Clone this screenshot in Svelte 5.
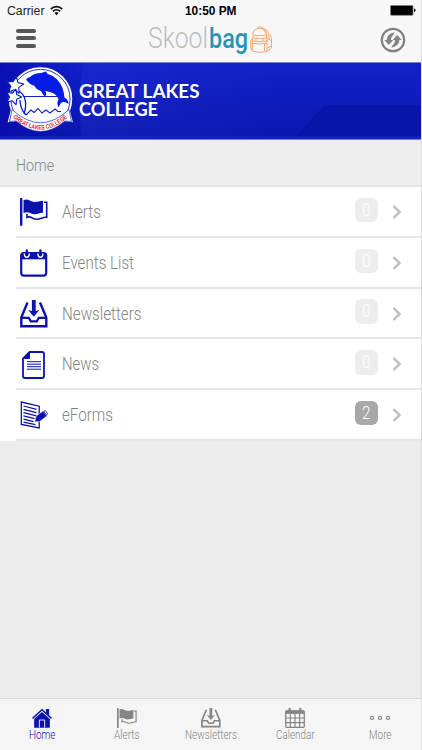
<script>
  const rows = [
    { icon: 'flag', label: 'Alerts', width: 39, inset: 0, count: 0 },
    { icon: 'events', label: 'Events List', width: 72, inset: 0, count: 0 },
    { icon: 'inbox', label: 'Newsletters', width: 79.5, inset: 0.3, count: 0 },
    { icon: 'news', label: 'News', width: 37, inset: 0.3, count: 0 },
    { icon: 'forms', label: 'eForms', width: 51, inset: 0, count: 2 }
  ];
  const tabs = [
    { icon: 'home', label: 'Home', width: 26.5 },
    { icon: 'flag', label: 'Alerts', width: 25.5 },
    { icon: 'inbox', label: 'Newsletters', width: 52 },
    { icon: 'calendar', label: 'Calendar', width: 38.5 },
    { icon: 'more', label: 'More', width: 22.5 }
  ];

  function star(cx, cy, r, turn) {
    return Array.from({ length: 10 }, (_, i) => {
      const a = turn + (i * Math.PI) / 5;
      const d = i % 2 ? r * 0.48 : r;
      return `${(cx + d * Math.sin(a)).toFixed(1)},${(cy - d * Math.cos(a)).toFixed(1)}`;
    }).join(' ');
  }
</script>

{#snippet fit(label, width, size, height, base)}
  <svg class="fit" {width} {height}>
    <text x="0" y={base} font-size={size} textLength={width} lengthAdjust="spacingAndGlyphs">{label}</text>
  </svg>
{/snippet}

{#snippet icon(name, size)}
  <svg class="icon" width={size} height={size} viewBox="0 0 28 28" fill="none" stroke="currentColor">
    {#if name === 'flag'}
      <path d="M1.200 1V26.800" stroke-width="2.400" stroke-linecap="round" />
      <path d="M3.500 2.200c4-2.200 7 1.600 11 1.800 3 .1 5-.8 8.500-1.200v12c-3.500-.2-5 1.700-9 1.400-4-.6-6-3.400-10.500-1.200z" fill="currentColor" stroke="none" />
      <path d="M24 4.300h2.700v15c-4-.6-6 2.200-10.200 2-4-.2-6-3.900-9.500-1.900v-3.500" stroke-width="1.600" />
    {:else if name === 'events'}
      <rect x="1.200" y="4" width="25" height="22.600" rx="2.500" stroke-width="2.200" />
      <path d="M1.500 4.500h24.500v5.800H1.500z" fill="currentColor" stroke="none" />
      <path d="M4.300 4.500c0 5 5 5 5 0M17.900 4.500c0 5 5 5 5 0" stroke="#fff" stroke-width="1.300" />
      <path d="M6.800 1.500v4M20.400 1.500v4" stroke-width="2.300" stroke-linecap="round" />
    {:else if name === 'inbox'}
      <path d="M7.500 2.500 1.300 17.500v8.700h25V17.500L20 2.500" stroke-width="2.400" />
      <path d="M1.300 17.800h7.500l2 3.500h6l2-3.500h7.500" stroke-width="2.300" />
      <path d="M13.800 0v12" stroke-width="3.800" />
      <path d="M8 9.800l3.500 1.200h4.600l3.500-1.200-5.800 7z" fill="currentColor" stroke="none" />
    {:else if name === 'news'}
      <path d="M9.500 1H22q2 0 2 2v22q0 2-2 2H5q-2 0-2-2V7.500z" stroke-width="1.800" />
      <path d="M9.500 1v6.500H3z" fill="currentColor" />
      <path d="M7 10.700h14M7 13.200h14M7 15.700h14M7 18.200h14" stroke-width="1" />
    {:else if name === 'forms'}
      <path d="M1.300 1 19.200 5.200v21.800L1.300 23.500z" stroke-width="1.300" />
      <path d="M3.500 5l13 3.300M3.500 8.300l13 3.300M3.500 11.600l13 3.300M3.500 14.900l11 2.800M3.500 18.200l10 2.500M3.500 21.200l12 2.500" stroke-width="1.200" />
      <path d="M14.800 21l1.200-5.700 7-5.300 3.800 5-7 5.400z" fill="currentColor" stroke="#fff" stroke-width=".5" />
      <path d="M23.600 10.300l1.700-.8 2.200 2.900-.9 1.900z" fill="#fff" stroke-width=".8" />
    {:else if name === 'home'}
      <path d="M.8 14.500 14 2.300l13.200 12.200" stroke-width="2" />
      <path d="M19.500 1.500H24v9l-4.500-4zM3 15.500 14 5.500l11 10v12H3z" fill="currentColor" stroke="none" />
      <path d="M10.300 27.500V16.800h7.400v10.700" stroke="#f5f5f5" stroke-width="1.300" />
    {:else if name === 'calendar'}
      <rect x="1" y="4" width="26" height="23" rx="1.500" stroke-width="1.800" />
      <path d="M1 3.500h26v4.800H1z" fill="currentColor" stroke="none" />
      <path d="M6.500 0v6M21.500 0v6" stroke-width="3" />
      <path d="M7.500 8v19M14 8v19M20.500 8v19M1 14h26M1 20.500h26" stroke-width="1.600" />
    {:else}
      <circle cx="2.900" cy="13.800" r="2.300" stroke-width="1.500" />
      <circle cx="14" cy="13.800" r="2.300" stroke-width="1.500" />
      <circle cx="25.100" cy="13.800" r="2.300" stroke-width="1.500" />
    {/if}
  </svg>
{/snippet}

<main class="screen">
  <header>
    <div class="status">
      <div class="carrier">
        {@render fit('Carrier', 37.5, 12, 20, 15.2)}
        <svg width="13" height="11" viewBox="0 0 13 11" fill="none" stroke="#111" stroke-width="1.700">
          <path d="M.8 4.100a8 8 0 0 1 11.400 0M2.900 6.300a5.200 5.200 0 0 1 7.200 0" />
          <path d="M4.500 8a2.900 2.900 0 0 1 4 0l-2 2.200z" fill="#111" stroke="none" />
        </svg>
      </div>
      <div class="clock">{@render fit('10:50 PM', 51.5, 12, 20, 15.3)}</div>
      <svg class="battery" width="26" height="11" viewBox="0 0 26 11">
        <rect x=".5" y=".5" width="22.500" height="9.800" rx="1" stroke="#777" stroke-width=".7" />
        <path d="M24 3.500q1.500 0 1.500 1.800t-1.500 1.800z" />
      </svg>
    </div>
    <div class="nav">
      <div class="menu"><i></i><i></i><i></i></div>
      <div class="logo">
        <span class="skool">{@render fit('Skool', 60, 29, 40, 28)}</span>
        <span class="bag">{@render fit('bag', 39, 28, 40, 28)}</span>
        <svg class="pack" width="24" height="28" viewBox="0 0 24 28" fill="none" stroke="#eda468" stroke-width=".9" stroke-linejoin="round">
          <path d="M3 25 1.800 22V14L4 12V7q1-4.500 7-4.500T17.500 8l.5 6v11.500q-7 2-15-.5z" />
          <path d="M8 2.800q0-2 3-2t3 2M13 2.500q6 0 6.800 6L20 13l2.500 2v7L18 25.500M4 12q7 1.500 13.800 0M4 15q7 1.500 14 0M2 17q8 2 16 0M4 9q6 1.500 13 0M15 4.500q3 2 3 8M20 13l-2 2M20 8l2 2 .5 5M18 22l4.500-2" />
          <path d="M3.500 12v12M15.500 17v8.500M7 12v3M14 12v3" />
        </svg>
      </div>
      <svg class="sync" width="26" height="26" viewBox="0 0 26 26" fill="#858585">
        <circle cx="13" cy="13" r="11.200" fill="none" stroke="#808080" stroke-width="2.200" />
        <path d="M4.300 13h2.300q.3-6.500 8.400-7.800l-2 3q-2 1.600-2 4.800h2.300L8.800 18z" />
        <path d="M21.700 13h-2.300q-.3 6.500-8.400 7.800l2-3q2-1.600 2-4.800h-2.300L17.200 8z" />
      </svg>
    </div>
  </header>

  <section class="banner">
    <svg width="421" height="78" viewBox="0 0 421 78">
      <defs>
        <linearGradient id="blue" x1="0" y1="0" x2="0" y2="1">
          <stop offset="0" stop-color="#1121cb" />
          <stop offset="1" stop-color="#0c17ad" />
        </linearGradient>
        <linearGradient id="side" x1="0" x2="1">
          <stop offset="0" stop-color="#0707a8" stop-opacity=".6" />
          <stop offset="1" stop-color="#0707a8" stop-opacity="0" />
        </linearGradient>
        <linearGradient id="sheen" x1="0" x2="1">
          <stop offset="0" stop-color="#3040d8" stop-opacity=".2" />
          <stop offset="1" stop-color="#3040d8" stop-opacity="0" />
        </linearGradient>
      </defs>
      <rect width="421" height="78" fill="url(#blue)" />
      <rect width="84" height="78" fill="url(#side)" />
      <path d="M84 0q-8 38-2 75h200V0z" fill="url(#sheen)" />
      <path d="M325 43h96v32H295z" fill="#0710a2" opacity=".6" />
      <path d="M0 75.500h421" stroke="#1426cb" stroke-width="2" />
      <path d="M0 .5h421M0 77.500h421" stroke="#7180de" />
      <g stroke="#fff" fill="none">
        <path d="M12 46 8.500 59.500l7-.8h50l6.500.8-3.500-13.500z" fill="#1420b8" stroke-width="1.300" />
        <circle cx="40.500" cy="37" r="31" fill="#fff" stroke-width="1.500" />
        <circle cx="40.500" cy="37" r="29.600" stroke="#1524c8" stroke-width=".9" />
        <path d="M12 47.500Q40.500 74 69 47.500l2.500 12-6.500-.5Q40.500 80 16 59l-6.500.5z" fill="#fff" stroke="#1524c8" stroke-width=".7" />
      </g>
      <path d="M24 34.500h36M26 53l5-5 3 2.500 4-4 4 4.500 4-3 4 3 5-4 3 2.500 3 0" fill="none" stroke="#1222c5" stroke-width="1.100" />
      <path d="M26 17.500q2-2.500 4-2.500 4-4 11-4l5-1.500 1.500 2.300Q58 15 62.500 26q1.500 4 2 9.500 4 2 4 6.500-3-2.500-6-2-3 1.500-3.500 5.500-3-3-.5-8.500-2-5-7-6.500-4-1-6.500-1.800 2.500 2.500 0 6-2.500-2-4-5.700-4-1-7-5.500-4-.5-8-6z" fill="#071be6" />
      <path d="M20 38q0 9 6 15M19 29q10 7 5 23" fill="none" stroke="#071bc7" stroke-width="1.300" />
      <g fill="#fff" stroke="#071bc7" stroke-width="1.100" stroke-linejoin="round">
        <polygon points={star(15, 23.5, 8.8, 0.15)} />
        <polygon points={star(13.500, 35, 8.2, 0.3)} />
      </g>
      <path id="ribbon" d="M11.500 54.500Q40.500 81 69.500 54" fill="none" />
      <text class="seal" font-size="6.500"><textPath href="#ribbon" startOffset="1.500" textLength="61" lengthAdjust="spacingAndGlyphs">GREAT LAKES COLLEGE</textPath></text>
      <text class="school" x="79" y="36" font-size="19.500" textLength="120.500" lengthAdjust="spacingAndGlyphs">GREAT LAKES</text>
      <text class="school" x="79" y="53.500" font-size="19" textLength="79" lengthAdjust="spacingAndGlyphs">COLLEGE</text>
    </svg>
  </section>

  <div class="crumb">{@render fit('Home', 38, 17, 45, 30.5)}</div>

  <ul>
    {#each rows as row}
      <li>
        <span class="row-icon">{@render icon(row.icon, 28)}</span>
        <span class="label" style:padding-left="{row.inset}px">{@render fit(row.label, row.width, 17.5, 48, 30.5)}</span>
        <span class="badge" class:on={row.count > 0}>{@render fit(String(row.count), 8.5, 18, 24, 18)}</span>
        <svg class="chevron" width="10" height="16" viewBox="0 0 10 16" fill="none" stroke="#bcbcbc" stroke-width="2.400">
          <path d="M1.500 2 7.500 8l-6 6" />
        </svg>
      </li>
    {/each}
  </ul>

  <nav class="tabs">
    {#each tabs as tab, i}
      <div class="tab" class:current={i === 0}>
        {@render icon(tab.icon, 20)}
        {@render fit(tab.label, tab.width, 12, 16, 11)}
      </div>
    {/each}
  </nav>
</main>

<style>
  .screen {
    width: 422px;
    height: 750px;
    box-sizing: border-box;
    border-right: 1px solid #dedede;
    display: flex;
    flex-direction: column;
    background: #ececec;
    font-family: Roboto, sans-serif;
    font-weight: 300;
    color: #858585;
    overflow: hidden;
  }
  svg { display: block; flex: none; }
  .fit { overflow: visible; fill: currentColor; }
  header { height: 62px; background: #f7f7f7; }
  .status {
    height: 20px;
    display: grid;
    grid-template-columns: 1fr 51.5px 1fr;
    color: #000;
    font-family: "Liberation Sans", Arial, sans-serif;
  }
  .carrier { display: flex; gap: 6px; padding-left: 6.500px; font-weight: 400; color: #222; }
  .carrier > svg:last-child { margin-top: 5px; }
  .clock { font-weight: 700; }
  .battery { justify-self: end; margin: 5.300px 5px 0 0; }
  .nav { height: 42px; display: flex; }
  .menu {
    width: 131.500px;
    padding: 8.500px 0 0 16px;
    display: flex;
    flex-direction: column;
    gap: 3.500px;
  }
  .menu i { width: 20px; height: 4px; border-radius: 2px; background: #575757; }
  .logo { display: flex; }
  .skool { color: #bdbdbd; margin-right: 1px; }
  .bag { color: #2894b6; font-weight: 500; }
  .pack { margin: 6px 0 0 1.500px; }
  .sync { margin: 7px 15px 0 auto; }
  .banner { height: 78px; }
  .school { fill: #fff; font-family: Lato, sans-serif; font-weight: 700; }
  .seal { fill: #e3262e; font-family: "Liberation Sans", Arial, sans-serif; font-weight: 700; }
  .crumb {
    height: 47px;
    box-sizing: border-box;
    padding-left: 15.500px;
    border-bottom: 2px solid #e4e4e4;
    background: #eee;
  }
  ul { margin: 0; padding: 0 0 0 16px; list-style: none; background: #fff; }
  li {
    height: 50.800px;
    box-sizing: border-box;
    display: flex;
    border-bottom: 2px solid #e6e6e6;
  }
  .row-icon { color: #0b13ac; padding: 11.200px 13.500px 0 4px; }
  .label { flex: 1; }
  .badge {
    width: 23px;
    height: 24.500px;
    margin: 10.800px 14px 0 0;
    border-radius: 6px;
    display: flex;
    justify-content: center;
    background: #ededed;
    color: #fff;
  }
  .badge.on { background: #a8a8a8; }
  .chevron { margin: 17px 19px 0 0; }
  .tabs {
    height: 52px;
    box-sizing: border-box;
    margin-top: auto;
    margin-right: -1px;
    border-top: 1px solid #dadada;
    background: #f5f5f5;
    display: grid;
    grid-template-columns: repeat(5, 1fr);
  }
  .tab { display: flex; flex-direction: column; align-items: center; padding-top: 9px; }
  .tab.current { color: #0b13ac; }
</style>
